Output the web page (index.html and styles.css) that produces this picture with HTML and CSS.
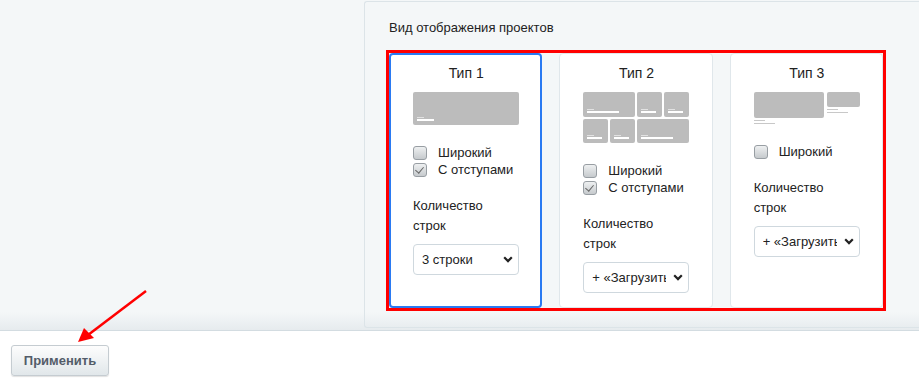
FILE: index.html
```html
<!DOCTYPE html>
<html lang="ru">
<head>
    <meta charset="UTF-8">
    <meta name="viewport" content="width=device-width, initial-scale=1.0">
    <title>Вид отображения проектов</title>
    <link rel="stylesheet" href="styles.css">
</head>
<body>
    <div class="settings">
        <div class="settings-side"></div>
        <div class="panel">
            <div class="panel-title">Вид отображения проектов</div>

            <div class="types">
                <!-- type 1 -->
                <div class="type-card active">
                    <div class="type-name">Тип 1</div>
                    <div class="preview preview-1">
                        <div class="tile tile-wide"><i class="ln-short"></i><i class="ln-long"></i></div>
                    </div>
                    <label class="check"><span class="box"></span>Широкий</label>
                    <label class="check"><span class="box checked"></span>С отступами</label>
                    <div class="rows-label">Количество строк</div>
                    <div class="select-wrap">
                        <select class="select"><option>3 строки</option></select>
                        <span class="chevron"><svg width="10" height="7" viewBox="0 0 10 7"><path d="M1.2 1.3 5 5.1 8.8 1.3" fill="none" stroke="#222" stroke-width="2.2"/></svg></span>
                    </div>
                </div>

                <!-- type 2 -->
                <div class="type-card">
                    <div class="type-name">Тип 2</div>
                    <div class="preview preview-2">
                        <div class="tile t2-a"><i class="ln-short"></i><i class="ln-long"></i></div>
                        <div class="tile"><i class="ln-short"></i><i class="ln-long"></i></div>
                        <div class="tile"><i class="ln-short"></i><i class="ln-long"></i></div>
                        <div class="tile"><i class="ln-short"></i><i class="ln-long"></i></div>
                        <div class="tile"><i class="ln-short"></i><i class="ln-long"></i></div>
                        <div class="tile t2-f"><i class="ln-short"></i><i class="ln-long"></i></div>
                    </div>
                    <label class="check"><span class="box"></span>Широкий</label>
                    <label class="check"><span class="box checked"></span>С отступами</label>
                    <div class="rows-label">Количество строк</div>
                    <div class="select-wrap">
                        <select class="select"><option>+ «Загрузить» ещё</option></select>
                        <span class="chevron"><svg width="10" height="7" viewBox="0 0 10 7"><path d="M1.2 1.3 5 5.1 8.8 1.3" fill="none" stroke="#222" stroke-width="2.2"/></svg></span>
                    </div>
                </div>

                <!-- type 3 -->
                <div class="type-card">
                    <div class="type-name">Тип 3</div>
                    <div class="preview preview-3">
                        <div class="p3-item p3-big"><div class="p3-img"></div><i class="ln-short"></i><i class="ln-long"></i></div>
                        <div class="p3-item p3-small"><div class="p3-img"></div><i class="ln-short"></i><i class="ln-long"></i></div>
                    </div>
                    <label class="check"><span class="box"></span>Широкий</label>
                    <div class="rows-label">Количество строк</div>
                    <div class="select-wrap">
                        <select class="select"><option>+ «Загрузить» ещё</option></select>
                        <span class="chevron"><svg width="10" height="7" viewBox="0 0 10 7"><path d="M1.2 1.3 5 5.1 8.8 1.3" fill="none" stroke="#222" stroke-width="2.2"/></svg></span>
                    </div>
                </div>
            </div>
        </div>
    </div>

    <div class="footer">
        <button class="apply-btn" type="button">Применить</button>
    </div>

    <!-- red arrow annotation -->
    <svg class="arrow" width="919" height="388" viewBox="0 0 919 388">
        <line x1="146" y1="291" x2="88" y2="335" stroke="#f00" stroke-width="2.5"/>
        <polygon points="78,342 84,328 94,338" fill="#f00"/>
    </svg>
</body>
</html>
```

FILE: styles.css
```css
body {
    margin: 0;
    font-family: "Liberation Sans", Arial, sans-serif;
    color: #333;
    background: #fff;
}

.settings {
    display: grid;
    grid-template-columns: 364px 1fr;
    height: 330px;
    background: linear-gradient(to bottom, #f4f7f8 0, #f4f7f8 312px, #e6ebee 330px);
    border-bottom: 1px solid #d3dce1;
}

.panel {
    margin-top: 1px;
    margin-bottom: 2px;
    border: 1px solid #dce4e8;
    border-right: none;
    border-radius: 3px 0 0 3px;
    padding: 18px 0 0 24px;
}

.panel-title {
    font-size: 13px;
    line-height: 16px;
    color: #222;
}

.types {
    display: flex;
    gap: 17px;
    width: 494px;
    height: 255px;
    margin-top: 17px;
    outline: 3px solid #f00;
}

.type-card {
    flex: 1;
    display: flex;
    flex-direction: column;
    background: #fff;
    border: 1px solid #e0e7eb;
    border-radius: 4px;
    padding: 11px 22px 0 23px;
}

.type-card.active {
    border: 2px solid #2a7af2;
    padding: 10px 21px 0 22px;
}

.type-name {
    text-align: center;
    font-size: 14px;
    line-height: 17px;
    color: #222;
    margin-bottom: 10px;
}

/* previews */
.preview {
    width: 106px;
    margin-bottom: 19px;
}

.tile {
    background: #bcbcbc;
    border-radius: 2px;
    position: relative;
    height: 100%;
}

.tile i {
    position: absolute;
    left: 4px;
    display: block;
}

.tile .ln-short {
    width: 7px;
    height: 1px;
    bottom: 7px;
    background: #e2e2e2;
}

.tile .ln-long {
    width: 60%;
    height: 2px;
    bottom: 4px;
    background: #fff;
}

.preview-1 {
    height: 33px;
}

.preview-1 .ln-long {
    width: 17px;
}

.preview-2 {
    height: 51px;
    display: grid;
    grid-template-columns: repeat(4, 1fr);
    grid-template-rows: 1fr 1fr;
    gap: 2px;
}

.preview-2 .t2-a,
.preview-2 .t2-f {
    grid-column: span 2;
}

.preview-3 {
    display: flex;
    gap: 3px;
}

.p3-item i {
    display: block;
    background: #c8c8c8;
    height: 1px;
    margin-top: 2px;
}

.p3-item .ln-short {
    width: 11px;
}

.p3-item .ln-long {
    width: 21px;
}

.p3-img {
    background: #bcbcbc;
    border-radius: 2px;
}

.p3-big {
    width: 70px;
}

.p3-big .p3-img {
    height: 26px;
}

.p3-small {
    flex: 1;
}

.p3-small .p3-img {
    height: 15px;
}

/* checkboxes */
.check {
    display: flex;
    align-items: center;
    gap: 11px;
    font-size: 13px;
    line-height: 17px;
    color: #222;
    white-space: nowrap;
}

.box {
    width: 12px;
    height: 12px;
    border: 1px solid #989ea3;
    border-radius: 3px;
    background: linear-gradient(to bottom, #eef0f1, #c6cacd);
    position: relative;
}

.box.checked::after {
    content: "";
    position: absolute;
    left: 3px;
    top: 1px;
    width: 4px;
    height: 7px;
    border: solid #666;
    border-width: 0 1.5px 1.5px 0;
    transform: rotate(40deg);
}

.rows-label {
    margin-top: 18px;
    width: 90px;
    font-size: 13px;
    line-height: 20px;
    color: #222;
}

.select-wrap {
    position: relative;
    margin-top: 8px;
    width: 106px;
}

.select {
    appearance: none;
    -webkit-appearance: none;
    width: 106px;
    height: 31px;
    border: 1px solid #cfd8de;
    border-radius: 4px;
    background: #fff;
    padding: 0 22px 0 8px;
    font-family: "Liberation Sans", Arial, sans-serif;
    font-size: 13px;
    color: #222;
}

.chevron {
    position: absolute;
    right: 6px;
    top: 12px;
    line-height: 0;
    pointer-events: none;
}

/* footer */
.footer {
    padding: 14px 11px;
}

.apply-btn {
    height: 31px;
    width: 98px;
    border: 1px solid #c5ccd1;
    border-radius: 3px;
    background: linear-gradient(to bottom, #fdfdfd, #e1e7ea);
    box-shadow: 0 1px 1px rgba(0, 0, 0, 0.12);
    font-family: "Liberation Sans", Arial, sans-serif;
    font-weight: bold;
    font-size: 13px;
    color: #535c69;
}

.arrow {
    position: absolute;
    left: 0;
    top: 0;
    pointer-events: none;
}
```
